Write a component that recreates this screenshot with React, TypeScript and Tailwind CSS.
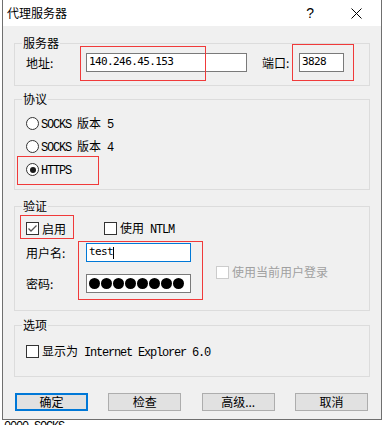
import type { ReactNode } from 'react'

function Ascii({ children }: { children: ReactNode }) {
  return <span className="font-['Liberation_Mono',monospace] tracking-[-1.2px]">{children}</span>
}

function Group({ title, className, children }: { title: string; className: string; children: ReactNode }) {
  return (
    <fieldset className={`border border-[#dcdcdc] p-0 ${className}`}>
      <legend className="ml-[7px] px-[1px] leading-[16px]">{title}</legend>
      {children}
    </fieldset>
  )
}

function Check({ checked = false, disabled = false }: { checked?: boolean; disabled?: boolean }) {
  return (
    <span
      className={`flex h-[13px] w-[13px] shrink-0 items-center justify-center border bg-white ${
        disabled ? 'border-[#cccccc]' : 'border-[#333333]'
      }`}
    >
      {checked && (
        <svg width="11" height="11" viewBox="0 0 11 11">
          <path d="M1.5 5.5 L4 8 L9.5 2.5" fill="none" stroke="#555555" strokeWidth="1.3" />
        </svg>
      )}
    </span>
  )
}

function Radio({ checked = false, label }: { checked?: boolean; label: ReactNode }) {
  return (
    <div className="flex h-[23px] items-center gap-[2px] pl-[11px]">
      <span className="flex h-[13px] w-[13px] items-center justify-center rounded-full border border-[#333333] bg-white">
        {checked && <span className="h-[6px] w-[6px] rounded-full bg-[#1a1a1a]" />}
      </span>
      <span className="leading-[16px]">{label}</span>
    </div>
  )
}

function Button({ label, focused = false }: { label: string; focused?: boolean }) {
  return (
    <div
      className={`flex h-[18px] w-[73px] items-center justify-center bg-[#e1e1e1] leading-[14px] ${
        focused ? 'border-2 border-[#0078d7]' : 'border border-[#adadad]'
      }`}
    >
      {label}
    </div>
  )
}

const input = "flex h-[19px] items-center bg-white pl-[2px] font-['DejaVu_Sans_Mono',monospace] text-[11px] tracking-[-0.6px]"

export default function App() {
  return (
    <div className="relative h-[425px] w-[383px] overflow-hidden bg-white font-['Noto_Sans_CJK_SC','Microsoft_YaHei',sans-serif] text-[12px] text-black">
      <div className="ml-[2px] flex h-[420px] w-[380px] flex-col border-x border-b border-[#6f6f6f] bg-[#f0f0f0]">
        {/* title bar */}
        <div className="flex h-[26px] items-center bg-white pl-[4px] pr-[19px]">
          <span className="leading-[16px]">代理服务器</span>
          <span className="ml-auto font-['Liberation_Sans',sans-serif] text-[14px] leading-[16px]">?</span>
          <svg className="ml-[37px]" width="11" height="11" viewBox="0 0 11 11">
            <path d="M0.5 0.5 L10.5 10.5 M10.5 0.5 L0.5 10.5" stroke="#000" strokeWidth="1" />
          </svg>
        </div>

        <div className="flex flex-col px-[11px]">
          <Group title="服务器" className="mt-[9px]">
            <div className="flex items-center pb-[13px] pl-[11px] pt-[2px]">
              <span className="w-[60px] leading-[16px]">地址:</span>
              <div className={`${input} w-[161px] border border-[#7a7a7a]`}>140.246.45.153</div>
              <span className="ml-[15px] w-[37px] leading-[16px]">端口:</span>
              <div className={`${input} w-[45px] border border-[#7a7a7a]`}>3828</div>
            </div>
          </Group>

          <Group title="协议" className="mt-[5px]">
            <div className="flex flex-col pb-[8px] pt-[5px]">
              <Radio
                label={
                  <>
                    <Ascii>SOCKS </Ascii>版本<Ascii> 5</Ascii>
                  </>
                }
              />
              <Radio
                label={
                  <>
                    <Ascii>SOCKS </Ascii>版本<Ascii> 4</Ascii>
                  </>
                }
              />
              <Radio checked label={<Ascii>HTTPS</Ascii>} />
            </div>
          </Group>

          <Group title="验证" className="mt-[8px]">
            <div className="flex flex-col pb-[17px] pl-[11px] pt-[7px]">
              <div className="flex h-[15px] items-center">
                <div className="flex w-[78px] items-center gap-[3px]">
                  <Check checked />
                  <span className="leading-[16px]">启用</span>
                </div>
                <div className="flex items-center gap-[3px]">
                  <Check />
                  <span className="leading-[16px]">
                    使用<Ascii> NTLM</Ascii>
                  </span>
                </div>
              </div>
              <div className="mt-[7px] flex items-start">
                <div className="flex flex-col gap-[12px]">
                  <div className="flex items-center">
                    <span className="w-[60px] leading-[16px]">用户名:</span>
                    <div className={`${input} w-[105px] border border-[#0078d7]`}>
                      test
                      <span className="h-[12px] w-[1px] bg-black" />
                    </div>
                  </div>
                  <div className="flex items-center">
                    <span className="w-[60px] leading-[16px]">密码:</span>
                    <div className="flex h-[19px] w-[105px] items-center gap-[1px] border border-[#7a7a7a] bg-white pl-[2px]">
                      {Array.from({ length: 8 }, (_, i) => (
                        <span key={i} className="h-[11px] w-[11px] rounded-full bg-black" />
                      ))}
                    </div>
                  </div>
                </div>
                <div className="ml-[25px] mt-[21px] flex items-center gap-[3px]">
                  <Check disabled />
                  <span className="leading-[16px] text-[#a0a0a0]">使用当前用户登录</span>
                </div>
              </div>
            </div>
          </Group>

          <Group title="选项" className="mt-[6px]">
            <div className="mb-[17px] mt-[11px] flex h-[15px] items-center gap-[3px] pl-[11px]">
              <Check />
              <span className="leading-[16px]">
                显示为<Ascii> Internet Explorer 6.0</Ascii>
              </span>
            </div>
          </Group>

          <div className="mt-[16px] flex justify-between pl-[1px] pr-[2px]">
            <Button label="确定" focused />
            <Button label="检查" />
            <Button label="高级..." />
            <Button label="取消" />
          </div>
        </div>
      </div>
      <div className="pl-[4px] font-['Liberation_Mono',monospace] text-[12px] leading-[14px] tracking-[-1.2px]">0000 SOCKS</div>

      {/* red annotation boxes */}
      <div className="absolute left-[80px] top-[46px] h-[35px] w-[126px] border border-[#f03a3a]" />
      <div className="absolute left-[292px] top-[44px] h-[37px] w-[62px] border border-[#f03a3a]" />
      <div className="absolute left-[17px] top-[156px] h-[29px] w-[82px] border border-[#f03a3a]" />
      <div className="absolute left-[20px] top-[215px] h-[24px] w-[54px] border border-[#f03a3a]" />
      <div className="absolute left-[78px] top-[241px] h-[59px] w-[125px] border border-[#f03a3a]" />
    </div>
  )
}
